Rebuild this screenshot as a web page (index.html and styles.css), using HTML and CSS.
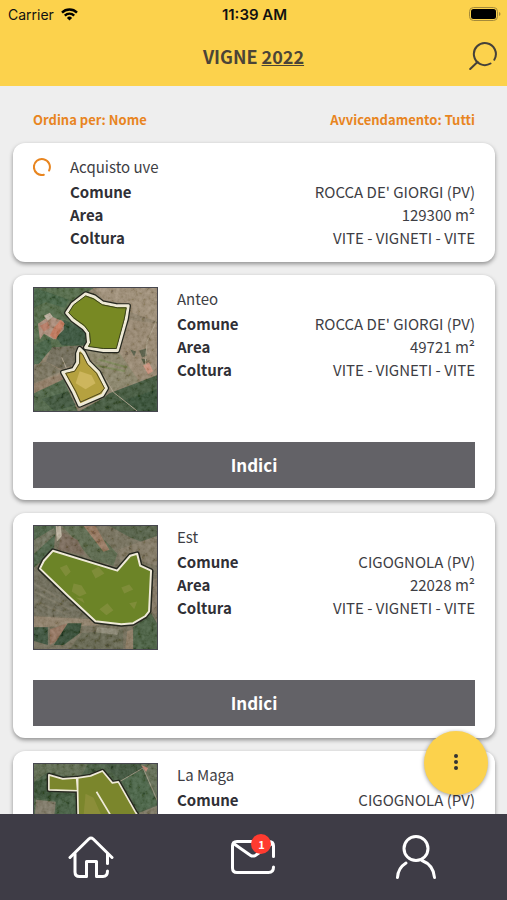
FILE: index.html
```html
<!DOCTYPE html>
<html lang="it">

<head>
    <meta charset="UTF-8">
    <meta name="viewport" content="width=device-width, initial-scale=1.0">
    <title>Vigne 2022</title>
    <link rel="stylesheet" href="styles.css">
</head>

<body>
    <header class="header">
        <div class="status-bar">
            <div class="status-left">
                <span>Carrier</span>
                <svg width="17" height="13" viewBox="0 0 17 13" fill="none" stroke="#000" stroke-width="2.4">
                    <path d="M1 4.6a10.6 10.6 0 0 1 15 0" />
                    <path d="M3.8 7.6a6.7 6.7 0 0 1 9.4 0" />
                    <path d="M8.5 12.5L5.9 9.9a3.7 3.7 0 0 1 5.2 0z" fill="#000" stroke="none" />
                </svg>
            </div>
            <div class="status-time">11:39 AM</div>
            <div class="status-right">
                <svg width="32" height="14" viewBox="0 0 32 14">
                    <rect x="0.5" y="0.5" width="28" height="13" rx="4" fill="none" stroke="#a48a3a" />
                    <rect x="2" y="2" width="25" height="10" rx="2.5" fill="#000" />
                    <path d="M30 5v4q1.5-.5 1.5-2t-1.5-2z" fill="#a48a3a" />
                </svg>
            </div>
        </div>
        <div class="title-bar">
            <h1 class="title">VIGNE <a href="#">2022</a></h1>
            <button class="search-button" aria-label="Cerca">
                <svg width="28" height="28" viewBox="0 0 28 28" fill="none" stroke="#45413a" stroke-width="2" stroke-linecap="round">
                    <path d="M25.3 17.7a11 11 0 1 0-3.8 3.8" />
                    <path d="M8.5 20L1.2 27" />
                </svg>
            </button>
        </div>
    </header>

    <main class="content">
        <div class="filters">
            <a href="#">Ordina per: Nome</a>
            <a href="#">Avvicendamento: Tutti</a>
        </div>

        <article class="card">
            <div class="card-body">
                <svg class="loader" width="18" height="18" viewBox="0 0 18 18" fill="none" stroke="#e8851f" stroke-width="2" stroke-linecap="round">
                    <path d="M16.1 12.5a8 8 0 1 0-5.3 4.3" />
                </svg>
                <div class="info">
                    <h2>Acquisto uve</h2>
                    <dl>
                        <div><dt>Comune</dt><dd>ROCCA DE' GIORGI (PV)</dd></div>
                        <div><dt>Area</dt><dd>129300 m²</dd></div>
                        <div><dt>Coltura</dt><dd>VITE - VIGNETI - VITE</dd></div>
                    </dl>
                </div>
            </div>
        </article>

        <article class="card">
            <div class="card-body">
                <svg class="map" viewBox="0 0 124 124" role="img" aria-label="Mappa Anteo">
                    <defs>
                        <filter id="grain" x="0" y="0" width="100%" height="100%">
                            <feTurbulence type="fractalNoise" baseFrequency="0.22" numOctaves="4" seed="4" />
                            <feColorMatrix values="0.9 0.4 0 0 -0.35  0.9 0.4 0 0 -0.35  0.9 0.4 0 0 -0.4  0 0 0 0 0.22" />
                        </filter>
                        <filter id="soft"><feGaussianBlur stdDeviation="0.8" /></filter>
                    </defs>
                    <rect width="124" height="124" fill="#8f8069" />
                    <g filter="url(#soft)">
                        <path d="M0 0H60L34 20L56 44L52 58L20 60L0 78z" fill="#4a6541" />
                        <path d="M30 32L52 42L52 58L28 58L20 46z" fill="#2c4c32" />
                        <path d="M0 58L16 50L18 60L4 78L0 76z" fill="#385a3b" />
                        <path d="M0 0L14 4L36 12L30 20L12 14L0 20z" fill="#395c3b" />
                        <path d="M60 0H124V34L96 24L92 16L70 12z" fill="#a39078" />
                        <path d="M96 32L124 36V90L104 92L84 70z" fill="#9b886f" />
                        <path d="M18 60L46 58L42 76L28 82L12 74z" fill="#6e6754" />
                        <path d="M0 78L12 74L28 84L0 96z" fill="#77705a" />
                        <path d="M0 97L28 86L30 92L0 108z" fill="#927a62" />
                        <path d="M0 106L30 92L44 124H0z" fill="#45613f" />
                        <path d="M8 112L34 104L42 118L20 124z" fill="#304e32" />
                        <path d="M52 62H84L106 94L78 104L62 80z" fill="#8b8467" />
                        <path d="M76 106L124 88V124H46L70 111z" fill="#354f32" />
                        <path d="M88 114L124 102V124H104z" fill="#284429" />
                        <path d="M4 36L16 28L30 34L30 42L20 52L10 46L6 52z" fill="#b08c79" />
                        <path d="M20 40L27 32L31 36L22 52L16 48z" fill="#cd7658" />
                        <path d="M6 38L14 34L16 40L10 44z" fill="#bd755d" />
                        <path d="M10 28l6-3 3 4-5 4z" fill="#c8b9a8" />
                        <path d="M110 78l6-3 4 9-5 3z" fill="#d7927c" />
                        <path d="M97 62l6 2-2 5zM106 63l7-2 1 7-5 2zM108 71l6 1-3 5z" fill="#4e553d" />
                        <path d="M65 72L94 80M62 78L92 84" stroke="#77824f" stroke-width="2" />
                    </g>
                    <path d="M70 88L80 105L104 124M28 70L34 84M124 32L114 54L112 78" fill="none" stroke="#b3a68f" stroke-width="1" />
                    <rect width="124" height="124" filter="url(#grain)" />
                    <g stroke-linejoin="round">
                        <g stroke="#25271f" stroke-width="5.5">
                            <path id="anteo-a" d="M52 6L61 9L69 15L84 18L95 18L93 31L84 63L70 63L52 60L55 55L54 45L50 40L39 32L33 25L39 16z" />
                            <path id="anteo-b" d="M46 61L50 65L55 75L65 85L73 101L69 108L46 118L40 105L29 85L40 82L44 75L44 66z" />
                        </g>
                    </g>
                    <g stroke="#eee9d6" stroke-width="3" stroke-linejoin="round">
                        <path d="M52 6L61 9L69 15L84 18L95 18L93 31L84 63L70 63L52 60L55 55L54 45L50 40L39 32L33 25L39 16z" fill="#788923" />
                        <path d="M46 61L50 65L55 75L65 85L73 101L69 108L46 118L40 105L29 85L40 82L44 75L44 66z" fill="#b5a13f" />
                    </g>
                    <path d="M52 8L60 11L69 17L84 20L93 20L91 31L83 61L70 61L55 59L57 55L56 45L51 38L40 30L35 25L40 17z" fill="#788923" stroke="#3a401c" />
                    <path d="M46 65L49 67L54 77L63 86L71 101L67 106L47 115L42 104L32 86L41 84L46 76z" fill="#b5a13f" stroke="#4c461f" />
                    <path d="M46 84L58 88L62 96L52 102L42 96z" fill="#cdb65d" filter="url(#soft)" />
                </svg>
                <div class="info">
                    <h2>Anteo</h2>
                    <dl>
                        <div><dt>Comune</dt><dd>ROCCA DE' GIORGI (PV)</dd></div>
                        <div><dt>Area</dt><dd>49721 m²</dd></div>
                        <div><dt>Coltura</dt><dd>VITE - VIGNETI - VITE</dd></div>
                    </dl>
                </div>
            </div>
            <button class="card-button">Indici</button>
        </article>

        <article class="card">
            <div class="card-body">
                <svg class="map" viewBox="0 0 124 124" role="img" aria-label="Mappa Est">
                    <rect width="124" height="124" fill="#716b56" />
                    <g filter="url(#soft)">
                        <path d="M0 0H22L20 24L0 42z" fill="#405a3c" />
                        <path d="M0 14L20 2L22 8L0 28z" fill="#6e715b" />
                        <path d="M28 0H58L84 28L80 40L58 34L42 14z" fill="#526444" />
                        <path d="M50 0H62L76 24L70 26z" fill="#9a755c" />
                        <path d="M28 6L44 14L52 30L24 24z" fill="#766452" />
                        <path d="M76 0H124V22L98 12z" fill="#4c5a40" />
                        <path d="M84 24L124 10V40L110 36L102 26L88 38z" fill="#807561" />
                        <path d="M22 0h5l1 10-5 6z" fill="#c7bba8" />
                        <path d="M0 44L8 46L54 92L0 90z" fill="#696653" />
                        <path d="M0 58L30 76M0 66L36 84M0 76L36 90" stroke="#746f5b" stroke-width="2" />
                        <path d="M0 91L58 94L66 100L0 102z" fill="#928069" />
                        <path d="M0 102H14V120L0 116z" fill="#2d4830" />
                        <path d="M16 104L34 98L30 112L16 120z" fill="#95705a" />
                        <path d="M34 98L48 98L46 108L30 120L20 120z" fill="#284329" />
                        <path d="M48 108L90 104V124H36z" fill="#5f6049" />
                        <path d="M64 102L86 104L84 110L62 107z" fill="#8d8974" />
                        <path d="M94 106L100 104V124H92z" fill="#8c785f" />
                        <path d="M100 102L118 88L124 98V124H100z" fill="#3e5838" />
                        <path d="M118 56L124 52V90L118 86z" fill="#80715b" />
                    </g>
                    <rect width="124" height="124" filter="url(#grain)" />
                    <g stroke-linejoin="round">
                        <path d="M19 25L84 45L97 30L104 28L107 40L118 45L116 86L112 91L100 98L88 99L62 96L34 70L6 43L10 35z" stroke="#25271f" stroke-width="5" />
                        <path d="M19 25L84 45L97 30L104 28L107 40L118 45L116 86L112 91L100 98L88 99L62 96L34 70L6 43L10 35z" fill="#6c8427" stroke="#efead8" stroke-width="2" />
                    </g>
                    <g filter="url(#soft)" fill="#92964c" opacity="0.5">
                        <path d="M26 42l7-3 4 7-5 5zM40 58l8 2 5 8-7 3-8-5zM58 45l7-4 6 7-9 5zM66 84l8-6 6 7-7 5zM42 72l7 1 2 5z" />
                        <path d="M88 62l8-3 4 5-9 4zM96 78l8-2-3 8z" />
                    </g>
                </svg>
                <div class="info">
                    <h2>Est</h2>
                    <dl>
                        <div><dt>Comune</dt><dd>CIGOGNOLA (PV)</dd></div>
                        <div><dt>Area</dt><dd>22028 m²</dd></div>
                        <div><dt>Coltura</dt><dd>VITE - VIGNETI - VITE</dd></div>
                    </dl>
                </div>
            </div>
            <button class="card-button">Indici</button>
        </article>

        <article class="card">
            <div class="card-body">
                <svg class="map" viewBox="0 0 124 124" role="img" aria-label="Mappa La Maga">
                    <rect width="124" height="124" fill="#3b5538" />
                    <g filter="url(#soft)">
                        <path d="M0 0H54L48 12L30 12L14 8L0 18z" fill="#57664a" />
                        <path d="M0 18L14 14L14 28L42 30V52H30L20 36L0 34z" fill="#294729" />
                        <path d="M2 36L22 38L20 56L0 64z" fill="#7b7563" />
                        <path d="M24 36L42 30L44 60H22z" fill="#385637" />
                        <path d="M70 0H112L104 12L86 16z" fill="#334b30" />
                        <path d="M88 16L108 6L124 40L106 48z" fill="#3e5d3e" />
                        <path d="M108 0H124V38z" fill="#5c694f" />
                        <path d="M104 50L124 42V124H100z" fill="#79735d" />
                    </g>
                    <path d="M86 18L110 4L124 36" fill="none" stroke="#9b9580" stroke-width="1" />
                    <path d="M108 1l7 3-2 4z" fill="#c88370" />
                    <rect width="124" height="124" filter="url(#grain)" />
                    <g fill="#7b862c" stroke-linejoin="round">
                        <path d="M15 11L29 15L43 14L44 27L15 26zM44 14L57 12L69 7L79 19L85 18L102 48L124 82V124H46L44 27z" stroke="#25271f" stroke-width="4.5" />
                        <path d="M15 11L29 15L43 14L44 27L15 26zM44 14L57 12L69 7L79 19L85 18L102 48L124 82V124H46L44 27zM63 28L78 53" stroke="#efead8" stroke-width="1.7" />
                    </g>
                    <path d="M52 30L60 34L68 52H50z" fill="#979443" opacity="0.6" filter="url(#soft)" />
                </svg>
                <div class="info">
                    <h2>La Maga</h2>
                    <dl>
                        <div><dt>Comune</dt><dd>CIGOGNOLA (PV)</dd></div>
                    </dl>
                </div>
            </div>
        </article>
    </main>

    <button class="fab" aria-label="Altro">
        <svg width="6" height="18" viewBox="0 0 6 18" fill="#333">
            <circle cx="3" cy="2" r="2" />
            <circle cx="3" cy="8" r="2" />
            <circle cx="3" cy="14" r="2" />
        </svg>
    </button>

    <nav class="nav">
        <a href="#" aria-label="Home">
            <svg width="46" height="44" viewBox="0 0 46 44">
                <path d="M2 22.5L20.800 4Q23 2 25.200 4L44 22.5" />
                <path d="M7 19V37Q7 41.500 11.500 41.500H18.500V26.500H28.500V41.500H35Q39.500 41.500 39.500 36" />
                <path d="M39.500 19V28.500" />
            </svg>
        </a>
        <a href="#" aria-label="Messaggi">
            <span class="mail">
                <svg width="46" height="36" viewBox="0 0 46 36">
                    <path d="M43.500 17.500V7Q43.500 2.500 39 2.500H7Q2.500 2.500 2.500 7V29Q2.500 33.500 7 33.500H38.500Q43.500 33.500 43.500 28" />
                    <path d="M3.500 4.500L20.300 16.200Q23 18 25.700 16.200L42 4.500" />
                </svg>
                <span class="badge">1</span>
            </span>
        </a>
        <a href="#" aria-label="Profilo">
            <svg width="42" height="46" viewBox="0 0 42 46">
                <circle cx="21" cy="14.500" r="12" />
                <path d="M2.500 43.500Q3 34 11 29M27 26.500Q38.500 31 39.500 43.500" />
            </svg>
        </a>
    </nav>
</body>

</html>
```
FILE: styles.css
```css
* {
    box-sizing: border-box;
}

body {
    display: flex;
    flex-direction: column;
    height: 100vh;
    margin: 0;
    background-color: #eee;
    color: #3e3e44;
    font-family: "Noto Sans CJK SC", "Noto Sans", sans-serif;
    font-size: 15px;
}

h1,
h2,
dl,
dd {
    margin: 0;
}

a {
    color: inherit;
}

svg {
    display: block;
    flex-shrink: 0;
}

button {
    padding: 0;
    border: none;
    font-family: inherit;
    cursor: pointer;
}

.header {
    flex-shrink: 0;
    background-color: #fcd24c;
}

.status-bar {
    display: flex;
    align-items: center;
    height: 28px;
    padding: 0 6px 0 8px;
    color: #111;
    font-family: Inter, "Liberation Sans", sans-serif;
    font-size: 14px;
}

.status-left,
.status-right {
    display: flex;
    flex: 1;
    align-items: center;
    gap: 7px;
}

.status-right {
    justify-content: flex-end;
}

.status-time {
    font-size: 15px;
    font-weight: 600;
}

.title-bar {
    display: grid;
    grid-template-columns: 1fr auto 1fr;
    align-items: center;
    height: 58px;
    padding: 0 10px 3px;
}

.title {
    grid-column: 2;
    color: #4b4437;
    font-size: 18px;
    font-weight: bold;
}

.search-button {
    justify-self: end;
    background: none;
}

.content {
    flex: 1;
    min-height: 0;
    padding: 23px 12px 0 13px;
    overflow-y: auto;
    scrollbar-width: none;
}

.filters {
    display: flex;
    justify-content: space-between;
    padding: 0 20px 12px;
    color: #e8851f;
    font-size: 13px;
    font-weight: bold;
    line-height: 22px;
}

.filters a {
    text-decoration: none;
}

.card {
    margin-bottom: 13px;
    padding: 12px 20px;
    border-radius: 12px;
    background-color: #fff;
    box-shadow: 0 2px 4px rgba(0, 0, 0, 0.4);
}

.card-body {
    display: flex;
    gap: 19px;
}

.loader {
    margin-top: 3px;
}

.map {
    width: 125px;
    height: 125px;
    border: 1px solid #47474f;
}

.info {
    flex: 1;
}

.info h2 {
    padding-bottom: 1px;
    font-size: 15px;
    font-weight: normal;
    line-height: 24px;
}

.info dl {
    padding-bottom: 1px;
}

.info dl div {
    display: flex;
    justify-content: space-between;
    line-height: 23px;
}

.info dt {
    color: #303036;
    font-weight: bold;
}

.card-button {
    display: block;
    width: 100%;
    height: 46px;
    margin-top: 30px;
    padding-bottom: 2px;
    background-color: #636267;
    color: #fff;
    font-size: 17px;
    font-weight: bold;
}

.fab {
    position: fixed;
    right: 19px;
    bottom: 105px;
    display: flex;
    align-items: center;
    justify-content: center;
    width: 64px;
    height: 64px;
    border-radius: 50%;
    background-color: #fcd24c;
    box-shadow: 0 1px 4px rgba(0, 0, 0, 0.4);
}

.nav {
    display: flex;
    flex-shrink: 0;
    height: 86px;
    padding: 0 10px;
    background-color: #3e3c46;
}

.nav a {
    display: flex;
    flex: 1;
    align-items: center;
    justify-content: center;
}

.nav svg {
    fill: none;
    stroke: #fff;
    stroke-width: 3;
    stroke-linecap: round;
    stroke-linejoin: round;
}

.mail {
    position: relative;
}

.badge {
    position: absolute;
    top: -5px;
    right: 5px;
    width: 20px;
    height: 20px;
    border-radius: 50%;
    background-color: #ff3b30;
    color: #fff;
    font-size: 11px;
    font-weight: bold;
    line-height: 20px;
    text-align: center;
}
```
